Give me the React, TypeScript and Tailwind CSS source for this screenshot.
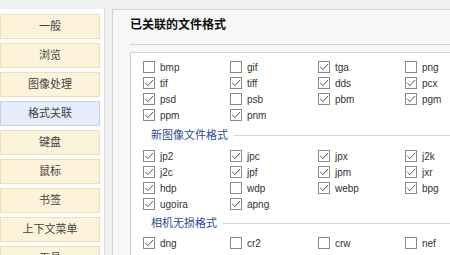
import React from "react";

const menu = ["一般", "浏览", "图像处理", "格式关联", "键盘", "鼠标", "书签", "上下文菜单", "工具"];

type Item = [string, boolean];

const common: Item[] = [
  ["bmp", false], ["gif", false], ["tga", true], ["png", false],
  ["tif", true], ["tiff", true], ["dds", true], ["pcx", true],
  ["psd", true], ["psb", false], ["pbm", true], ["pgm", true],
  ["ppm", true], ["pnm", true],
];

const newer: Item[] = [
  ["jp2", true], ["jpc", true], ["jpx", true], ["j2k", true],
  ["j2c", true], ["jpf", true], ["jpm", true], ["jxr", true],
  ["hdp", true], ["wdp", false], ["webp", true], ["bpg", true],
  ["ugoira", true], ["apng", true],
];

const raw: Item[] = [
  ["dng", true], ["cr2", false], ["crw", false], ["nef", false],
];

const Check = ({ label, on }: { label: string; on: boolean }) => (
  <label className="h-[16px] flex items-center gap-[5px] text-[10px] text-[#333]">
    <span className="w-[12px] h-[12px] border border-[#8a8a8a] bg-white flex items-center justify-center shrink-0">
      {on && (
        <svg width="10" height="10" viewBox="0 0 10 10">
          <polyline points="1.2,4.8 3.9,7.6 9,2" fill="none" stroke="#444" strokeWidth="0.9" />
        </svg>
      )}
    </span>
    {label}
  </label>
);

const Grid = ({ items }: { items: Item[] }) => (
  <div className="grid grid-cols-[87px_88px_87px_87px]">
    {items.map(([l, on]) => (
      <Check key={l} label={l} on={on} />
    ))}
  </div>
);

const Section = ({ title, h }: { title: string; h: string }) => (
  <div className={`flex items-center pl-[8px] ${h}`}>
    <span className="text-[11px] text-[#2b4a98] leading-none">{title}</span>
    <span className="flex-1 h-px bg-[#d6d6d6] ml-[6px]" />
  </div>
);

export default function App() {
  return (
    <div
      className="w-[450px] h-[255px] overflow-hidden bg-[#f0f0f0] flex"
      style={{ fontFamily: "'Liberation Sans', 'Noto Sans CJK SC', sans-serif" }}
    >
      {/* left menu */}
      <aside className="mt-[9px] w-[105px] shrink-0 bg-white border-r border-[#d9d9d9] pt-[5px] pr-[4px] flex flex-col gap-[4px]">
        {menu.map((m) => (
          <div
            key={m}
            className={
              m === "格式关联"
                ? "h-[25px] shrink-0 flex items-center justify-center text-[11px] text-[#444] bg-[#e3ecf9] border border-[#c3d3ec]"
                : "h-[25px] shrink-0 flex items-center justify-center text-[11px] text-[#444] bg-[#fdf3da] border border-[#f1dfb3]"
            }
          >
            {m}
          </div>
        ))}
      </aside>

      {/* right panel */}
      <div className="ml-[7px] mt-[9px] flex-1 min-w-0 border-l border-t border-[#d4d4d4] bg-[#f7f7f7] pl-[17px] flex flex-col">
        <div className="h-[35px] shrink-0 pt-[7px] border-b border-[#d2d2d2]">
          <h2 className="text-[12px] font-bold leading-[16px] text-[#111]">已关联的文件格式</h2>
        </div>
        <div className="mt-[7px] flex-1 border-l border-t border-[#d0d0d0] bg-white pl-[12px] pt-[6px]">
          <Grid items={common} />
          <Section title="新图像文件格式" h="h-[25px]" />
          <Grid items={newer} />
          <Section title="相机无损格式" h="h-[23px]" />
          <Grid items={raw} />
        </div>
      </div>
    </div>
  );
}
